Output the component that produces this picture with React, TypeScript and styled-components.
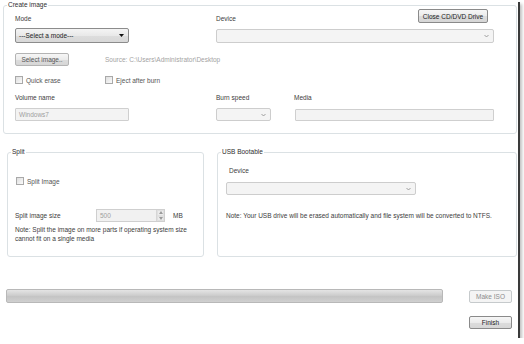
import React from 'react';
import styled, { createGlobalStyle } from 'styled-components';

const GlobalStyle = createGlobalStyle`
  * { box-sizing: border-box; }
  html, body { margin: 0; padding: 0; background: #fff; }
  body {
    font-family: "Liberation Sans", Arial, sans-serif;
    font-size: 6.5px;
    color: #3a3a3a;
  }
`;

const Chevron = () => (
  <svg width="5" height="4" viewBox="0 0 5 4">
    <path d="M0.5 1 L2.5 3 L4.5 1" fill="none" stroke="#8a8a8a" strokeWidth="0.8" />
  </svg>
);

const Triangle = () => (
  <svg width="5" height="3" viewBox="0 0 5 3">
    <polygon points="0,0 5,0 2.5,3" fill="#111" />
  </svg>
);

const App: React.FC = () => {
  return (
    <>
      <GlobalStyle />
      <Window>
        <Group>
          <Legend>Create image</Legend>
          <GroupBody $pad="0 22px 12px 11px">
            <Row $mt={0} $h={14}>
              <Cell $w={201}>
                <Label $bottom>Mode</Label>
              </Cell>
              <Cell>
                <Label $bottom>Device</Label>
              </Cell>
              <Button $w={70} $h={14} $mr={6}>Close CD/DVD Drive</Button>
            </Row>

            <Row $mt={5} $h={15}>
              <Cell $w={201}>
                <Select $w={114} $h={15}>
                  <span>---Select a mode---</span>
                  <Triangle />
                </Select>
              </Cell>
              <Cell>
                <Select $h={14} $disabled>
                  <span />
                  <Chevron />
                </Select>
              </Cell>
            </Row>

            <Row $mt={10} $h={13}>
              <Cell $w={90}>
                <Button $w={54} $h={13} $soft>Select image..</Button>
              </Cell>
              <Cell>
                <Muted>Source: C:\Users\Administrator\Desktop</Muted>
              </Cell>
            </Row>

            <Row $mt={10} $h={8}>
              <Cell $w={90}>
                <Check>
                  <Box />
                  <span>Quick erase</span>
                </Check>
              </Cell>
              <Cell>
                <Check>
                  <Box />
                  <span>Eject after burn</span>
                </Check>
              </Cell>
            </Row>

            <Row $mt={9} $h={9}>
              <Cell $w={201}>
                <Label>Volume name</Label>
              </Cell>
              <Cell $w={78}>
                <Label>Burn speed</Label>
              </Cell>
              <Cell>
                <Label>Media</Label>
              </Cell>
            </Row>

            <Row $mt={6} $h={13}>
              <Cell $w={201}>
                <Input $w={114} $h={13}>Windows7</Input>
              </Cell>
              <Cell $w={79}>
                <Select $w={55} $h={13} $disabled>
                  <span />
                  <Chevron />
                </Select>
              </Cell>
              <Cell>
                <Input $h={12} />
              </Cell>
            </Row>
          </GroupBody>
        </Group>

        <Columns>
          <Group $w={197}>
            <Legend>Split</Legend>
            <GroupBody $pad="0 0 13px 7px">
              <Row $mt={21} $h={8}>
                <Check $ml={1}>
                  <Box />
                  <span>Split Image</span>
                </Check>
              </Row>
              <Row $mt={24} $h={13}>
                <Cell $w={81}>
                  <Label>Split image size</Label>
                </Cell>
                <Spin>
                  <span>500</span>
                  <SpinButtons>
                    <SpinArrow>
                      <svg width="4" height="3" viewBox="0 0 4 3">
                        <polygon points="0,3 4,3 2,0" fill="#9a9a9a" />
                      </svg>
                    </SpinArrow>
                    <SpinArrow>
                      <svg width="4" height="3" viewBox="0 0 4 3">
                        <polygon points="0,0 4,0 2,3" fill="#9a9a9a" />
                      </svg>
                    </SpinArrow>
                  </SpinButtons>
                </Spin>
                <Unit>MB</Unit>
              </Row>
              <Note $mt={3}>
                Note: Split the image on more parts if operating system size
                <br />
                cannot fit on a single media
              </Note>
            </GroupBody>
          </Group>

          <Group $w={300} $ml={13}>
            <Legend>USB Bootable</Legend>
            <GroupBody $pad="0 0 0 8px">
              <Row $mt={10} $h={10}>
                <Label $ml={3}>Device</Label>
              </Row>
              <Row $mt={6} $h={13}>
                <Select $w={190} $h={13} $disabled>
                  <span />
                  <Chevron />
                </Select>
              </Row>
              <Note $mt={16} $lh={10}>
                Note: Your USB drive will be erased automatically and file system will be converted to NTFS.
              </Note>
            </GroupBody>
          </Group>
        </Columns>

        <Row $mt={32} $h={14}>
          <Progress />
          <Button $w={43} $h={13} $mr={5} $ml="auto" $disabled>
            Make ISO
          </Button>
        </Row>

        <Row $mt={13} $h={13}>
          <Button $w={43} $h={13} $mr={5} $ml="auto">
            Finish
          </Button>
        </Row>
      </Window>
    </>
  );
};

// Styled Components
const Window = styled.div`
  width: 518px;
  height: 338px;
  padding: 1px 1px 0 3px;
  display: flex;
  flex-direction: column;
  background: #fff;
  box-shadow: 2px 2px 0 #3a3a3a, 4px 4px 3px rgba(0, 0, 0, 0.25);
`;

const Group = styled.fieldset<{ $w?: number; $ml?: number }>`
  margin: 0 0 0 ${p => p.$ml ?? 0}px;
  padding: 0;
  min-width: 0;
  border: 1px solid #dbe1e4;
  border-radius: 3px;
  flex: ${p => (p.$w ? `0 0 ${p.$w}px` : '0 0 auto')};
`;

const Legend = styled.legend`
  margin-left: 3px;
  padding: 0 1px;
  line-height: 8px;
  font-size: 6.5px;
  color: #2e2e2e;
`;

const GroupBody = styled.div<{ $pad: string }>`
  padding: ${p => p.$pad};
  display: flex;
  flex-direction: column;
`;

const Columns = styled.div`
  display: flex;
  margin: 14px 0 0 4px;
`;

const Row = styled.div<{ $mt: number; $h: number }>`
  display: flex;
  align-items: center;
  margin-top: ${p => p.$mt}px;
  height: ${p => p.$h}px;
  flex: 0 0 auto;
`;

const Cell = styled.div<{ $w?: number }>`
  flex: ${p => (p.$w ? `0 0 ${p.$w}px` : '1 1 auto')};
  min-width: 0;
  height: 100%;
  display: flex;
  align-items: center;
`;

const Label = styled.span<{ $bottom?: boolean; $ml?: number }>`
  line-height: 8px;
  color: #3c3c3c;
  white-space: nowrap;
  margin-left: ${p => p.$ml ?? 0}px;
  align-self: ${p => (p.$bottom ? 'flex-end' : 'center')};
`;

const Muted = styled.span`
  color: #a3a3a3;
  white-space: nowrap;
`;

const Button = styled.div<{
  $w: number;
  $h: number;
  $mr?: number;
  $ml?: string;
  $soft?: boolean;
  $disabled?: boolean;
}>`
  width: ${p => p.$w}px;
  height: ${p => p.$h}px;
  margin-right: ${p => p.$mr ?? 0}px;
  margin-left: ${p => p.$ml ?? '0'};
  flex: 0 0 auto;
  display: flex;
  align-items: center;
  justify-content: center;
  white-space: nowrap;
  border-radius: 2px;
  border: 1px solid ${p => (p.$disabled ? '#c6cacc' : p.$soft ? '#b4b4b4' : '#8a8a8a')};
  background: ${p =>
    p.$disabled ? '#f4f4f4' : 'linear-gradient(#f6f6f6 0%, #ebebeb 50%, #dcdcdc 51%, #d6d6d6 100%)'};
  color: ${p => (p.$disabled ? '#8c8c8c' : p.$soft ? '#555' : '#222')};
`;

const Select = styled.div<{ $w?: number; $h: number; $disabled?: boolean }>`
  width: ${p => (p.$w ? `${p.$w}px` : '100%')};
  height: ${p => p.$h}px;
  display: flex;
  align-items: center;
  justify-content: space-between;
  padding: 0 4px 0 3px;
  border-radius: 2px;
  border: 1px solid ${p => (p.$disabled ? '#cdcdcd' : '#8c8c8c')};
  background: ${p =>
    p.$disabled ? '#f4f4f4' : 'linear-gradient(#f4f4f4 0%, #e9e9e9 50%, #dddddd 51%, #d8d8d8 100%)'};
  color: #222;
  white-space: nowrap;
`;

const Input = styled.div<{ $w?: number; $h: number }>`
  width: ${p => (p.$w ? `${p.$w}px` : '100%')};
  height: ${p => p.$h}px;
  display: flex;
  align-items: center;
  padding: 0 3px;
  border: 1px solid #cfcfcf;
  border-radius: 1px;
  background: #f3f3f3;
  color: #a0a0a0;
`;

const Check = styled.div<{ $ml?: number }>`
  display: flex;
  align-items: center;
  gap: 3px;
  margin-left: ${p => p.$ml ?? 0}px;
  color: #555;
  white-space: nowrap;
`;

const Box = styled.span`
  width: 8px;
  height: 8px;
  border: 1px solid #a9a9a9;
  background: linear-gradient(135deg, #dedede, #fbfbfb);
  flex: 0 0 auto;
`;

const Spin = styled.div`
  width: 69px;
  height: 13px;
  display: flex;
  align-items: center;
  justify-content: space-between;
  padding-left: 3px;
  border: 1px solid #cfcfcf;
  background: #f1f1f1;
  color: #a0a0a0;
`;

const SpinButtons = styled.div`
  width: 8px;
  height: 100%;
  display: flex;
  flex-direction: column;
  border-left: 1px solid #d6d6d6;
`;

const SpinArrow = styled.div`
  flex: 1;
  display: flex;
  align-items: center;
  justify-content: center;
  background: #ececec;
  border: 1px solid #e0e0e0;
`;

const Unit = styled.span`
  margin-left: 8px;
  color: #3c3c3c;
`;

const Note = styled.div<{ $mt: number; $lh?: number }>`
  margin-top: ${p => p.$mt}px;
  line-height: ${p => p.$lh ?? 9}px;
  color: #3c3c3c;
  white-space: nowrap;
`;

const Progress = styled.div`
  margin-left: 3px;
  width: 437px;
  height: 14px;
  border: 1px solid #b8b8b8;
  border-radius: 2px;
  background: linear-gradient(#e4e4e4 0%, #cdcdcd 45%, #c4c4c4 55%, #d0d0d0 100%);
`;

export default App;
